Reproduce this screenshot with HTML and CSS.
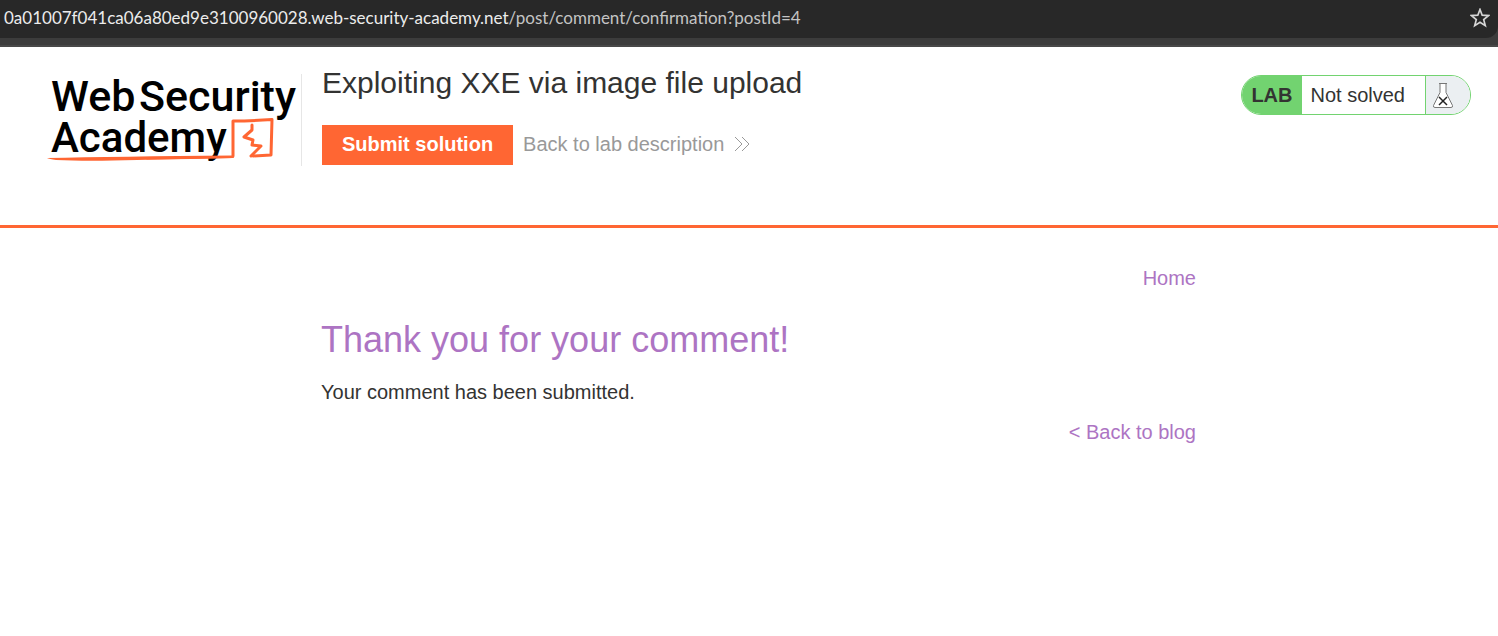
FILE: index.html
```html
<!DOCTYPE html>
<html lang="en">
<head>
<meta charset="utf-8">
<meta name="viewport" content="width=device-width, initial-scale=1">
<title>Exploiting XXE via image file upload</title>
<link rel="stylesheet" href="styles.css">
</head>
<body>
<div class="browser-bar">
  <div class="address">
    <span class="url"><span class="url-host">0a01007f041ca06a80ed9e3100960028.web-security-academy.net</span>/post/comment/confirmation?postId=4</span>
    <button class="bookmark" type="button" aria-label="Bookmark this page">
      <svg width="20" height="20" viewBox="0 0 20 20" fill="none" stroke="#d6d6d6" stroke-width="1.700"><path d="M10 1.500 12.200 7.200 18.500 7.600 13.700 11.600 15.300 17.600 10 14.300 4.700 17.600 6.300 11.600 1.500 7.600 7.800 7.200Z"/></svg>
    </button>
  </div>
</div>
<header class="lab-header">
  <a class="logo" href="#" aria-label="Web Security Academy">
    <svg width="250" height="92" viewBox="0 0 250 92">
      <g class="logo-text">
        <text x="4" y="37">Web</text>
        <text x="92" y="37">Security</text>
        <text class="logo-second" x="4" y="78">Academy</text>
      </g>
      <g fill="none" stroke="#ff6633" stroke-linecap="round" stroke-linejoin="round">
        <path stroke-width="2" d="M100 84.500Q145 84 186 83"/>
        <path stroke-width="3" d="M186 82 186 47Q205 47 225 45.500L224 81 206 82"/>
        <path stroke-width="3" d="M205 51 205 56 197 63 206 66 205 71 214 72 204 82"/>
      </g>
      <path fill="#ff6633" d="M0 84Q70 82.500 186 81.500L186 84Q130 85 90 86Q40 87.500 9 86Q2 85 0 84Z"/>
    </svg>
  </a>
  <div class="lab-title">
    <h2>Exploiting XXE via image file upload</h2>
    <div class="lab-actions">
      <button class="submit" type="button">Submit solution</button>
      <a class="back" href="#">Back to lab description
        <svg width="16" height="16" viewBox="0 0 16 16" fill="none" stroke="#999"><path d="M1 1 8 8 1 15M8 1 15 8 8 15"/></svg>
      </a>
    </div>
  </div>
  <div class="lab-status">
    <span class="status-label">LAB</span>
    <span class="status-text">Not solved</span>
    <span class="status-icon">
      <svg width="22" height="27" viewBox="0 0 22 27"><path fill="#fff" stroke="#777" d="M7 1.500H15M8 2V10.500L1.500 23.500Q1 25.500 3 25.500H19Q21 25.500 20.500 23.500L14 10.500V2"/><path fill="none" stroke="#222" stroke-width="1.500" d="M7 15 15 23M15 15 7 23"/></svg>
    </span>
  </div>
</header>
<main class="content">
  <nav class="top-links"><a href="#">Home</a></nav>
  <h1>Thank you for your comment!</h1>
  <p>Your comment has been submitted.</p>
  <div class="back-links"><a href="#">&lt; Back to blog</a></div>
</main>
</body>
</html>
```
FILE: styles.css
```css
* { box-sizing: border-box; }
body {
  margin: 0;
  background: #fff;
  color: #333332;
  font: 20px/24px "Liberation Sans", Arial, sans-serif;
}
a { text-decoration: none; }
h1, h2, p { margin: 0; font-weight: 400; }
svg { display: block; }
button { border: 0; padding: 0; font: inherit; cursor: pointer; }

.browser-bar {
  background: #3c3c3c;
  padding-bottom: 7px;
  border-bottom: 2px solid #484848;
}
.address {
  display: flex;
  align-items: center;
  justify-content: space-between;
  height: 38px;
  padding: 0 8px 2px 4px;
  background: #282828;
  border-bottom-right-radius: 12px;
  color: #c4c4c4;
  font: 17px/24px Lato, "Open Sans", sans-serif;
}
.url { white-space: nowrap; }
.url-host { color: #ececec; }
.bookmark { background: none; }

.lab-header {
  display: flex;
  align-items: flex-start;
  min-height: 181px;
  padding: 18px 27px 0 47px;
  border-bottom: 3px solid #ff6633;
}
.logo {
  margin: 9px 20px 0 0;
  padding-right: 4px;
  border-right: 1px solid #e6e6e6;
}
.logo svg { overflow: visible; }
.logo-text {
  font: 500 43px "Roboto", sans-serif;
  fill: #000;
}
.logo-second { font-size: 42px; }
.lab-title { flex: 1; }
.lab-title h2 { font-size: 30px; line-height: 36px; }
.lab-actions {
  display: flex;
  align-items: center;
  gap: 10px;
  margin-top: 24px;
}
.submit {
  height: 40px;
  padding: 0 20px 2px;
  background: #ff6633;
  color: #fff;
  font-weight: 700;
}
.back {
  display: flex;
  align-items: center;
  gap: 10px;
  padding-bottom: 2px;
  color: #999;
}
.lab-status {
  display: flex;
  height: 40px;
  margin-top: 10px;
  overflow: hidden;
  border: 1px solid #72d370;
  border-radius: 20px;
  line-height: 38px;
}
.status-label {
  padding: 0 9px;
  background: #72d370;
  font-weight: 700;
}
.status-text { padding: 0 20px 0 9px; }
.status-icon {
  display: flex;
  align-items: center;
  width: 45px;
  padding-left: 6px;
  border-left: 1px solid #72d370;
  background: #ebeff2;
}

.content { padding: 38px 302px 40px 321px; }
.content a { color: #ad74c3; }
.top-links, .back-links { text-align: right; }
.content h1 {
  margin: 28px 0 18px;
  color: #ad74c3;
  font-size: 36px;
  line-height: 44px;
}
.back-links { margin-top: 16px; }
```
